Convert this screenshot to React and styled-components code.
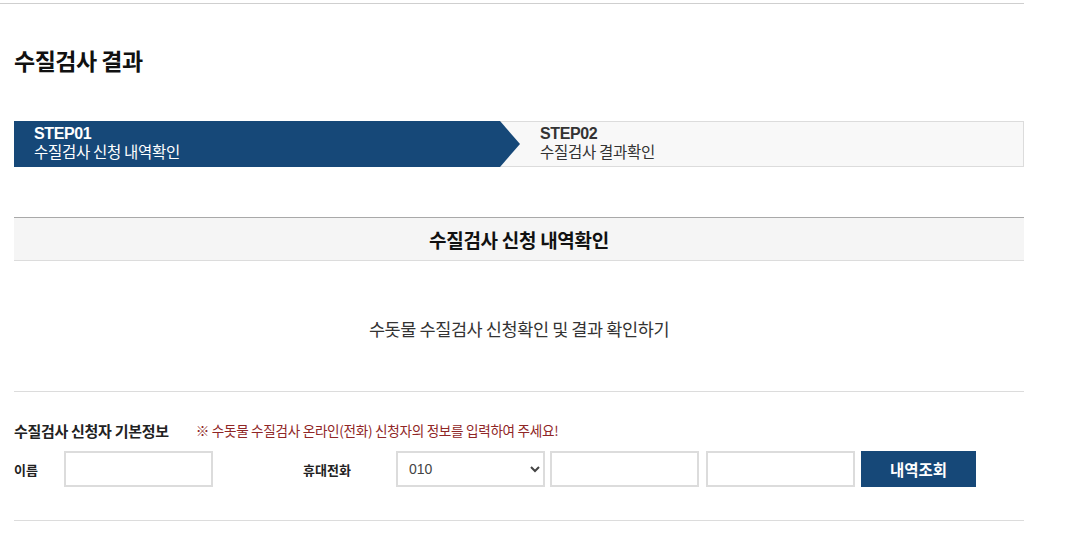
import React from 'react';
import styled, { createGlobalStyle } from 'styled-components';

const GlobalStyle = createGlobalStyle`
  body {
    margin: 0;
    background: #fff;
    font-family: "Noto Sans CJK KR", "Noto Sans", sans-serif;
    color: #222;
  }
  * { box-sizing: border-box; }
`;

const Page = styled.div`
  width: 1024px;
  padding-top: 3px;
`;

const TopRule = styled.div`
  height: 1px;
  background: #cfcfcf;
`;

const Content = styled.div`
  padding-left: 14px;
`;

const PageTitle = styled.h2`
  margin: 0;
  padding-top: 40px;
  height: 117px;
  font-size: 23px;
  font-weight: 700;
  letter-spacing: -0.5px;
  line-height: 32px;
  color: #111;
`;

const StepBar = styled.div`
  display: flex;
  height: 46px;
  background: #f8f8f8;
  border: 1px solid #dcdcdc;
`;

const Step = styled.div`
  display: flex;
  flex-direction: column;
  justify-content: center;
  padding-left: 20px;
  padding-bottom: 3px;
  color: ${p => (p.$active ? '#fff' : '#333')};
  ${p => p.$active && `
    width: 506px;
    margin: -1px 0 -1px -1px;
    background: #164878;
    clip-path: polygon(0 0, calc(100% - 20px) 0, 100% 50%, calc(100% - 20px) 100%, 0 100%);
  `}
`;

const StepNo = styled.span`
  font-family: "Liberation Sans", Arial, sans-serif;
  font-size: 16px;
  font-weight: 700;
  letter-spacing: -0.4px;
  line-height: 17px;
`;

const StepName = styled.span`
  font-size: 15.5px;
  line-height: 19px;
  letter-spacing: -0.3px;
`;

const SectionHead = styled.div`
  margin-top: 50px;
  height: 44px;
  display: flex;
  align-items: center;
  justify-content: center;
  background: #f5f5f5;
  border-top: 1px solid #a9a9a9;
  border-bottom: 1px solid #dcdcdc;
  font-size: 19px;
  font-weight: 700;
  letter-spacing: -0.3px;
  color: #111;
`;

const Intro = styled.p`
  margin: 0;
  height: 131px;
  padding-top: 56px;
  text-align: center;
  font-size: 17.5px;
  letter-spacing: -0.4px;
  line-height: 24px;
  color: #333;
  border-bottom: 1px solid #dcdcdc;
`;

const FormBox = styled.div`
  padding-top: 27px;
  height: 129px;
  border-bottom: 1px solid #dcdcdc;
`;

const FormTitleRow = styled.div`
  display: flex;
  align-items: center;
  gap: 27px;
  height: 22px;
`;

const FormTitle = styled.h3`
  margin: 0;
  font-size: 15px;
  font-weight: 700;
  letter-spacing: -0.3px;
  color: #222;
`;

const Notice = styled.span`
  font-size: 13.6px;
  letter-spacing: -0.3px;
  color: #8f2626;
`;

const FieldRow = styled.div`
  display: flex;
  align-items: center;
  margin-top: 10px;
  height: 36px;
`;

const Label = styled.label`
  width: ${p => p.$width}px;
  margin-left: ${p => p.$offset || 0}px;
  font-size: 13px;
  font-weight: 700;
  color: #222;
`;

const TextInput = styled.input`
  width: 149px;
  height: 36px;
  margin-right: ${p => p.$gap || 0}px;
  border: 2px solid #dcdcdc;
  background: #fff;
  padding: 0 10px;
  font-size: 13px;
  &:focus { outline: none; }
`;

const Select = styled.select`
  width: 149px;
  height: 36px;
  margin-right: 5px;
  border: 2px solid #dcdcdc;
  border-radius: 0;
  background: #fff;
  padding: 0 8px 0 7px;
  font-family: "Liberation Sans", Arial, sans-serif;
  font-size: 14px;
  color: #444;
`;

const SearchButton = styled.button`
  width: 115px;
  height: 36px;
  border: none;
  background: #164878;
  color: #fff;
  font-family: "Noto Sans CJK KR", sans-serif;
  font-size: 15.5px;
  font-weight: 700;
  cursor: pointer;
`;

const App = () => (
  <>
    <GlobalStyle />
    <Page>
      <TopRule />
      <Content>
        <PageTitle>수질검사 결과</PageTitle>
        <StepBar>
          <Step $active>
            <StepNo>STEP01</StepNo>
            <StepName>수질검사 신청 내역확인</StepName>
          </Step>
          <Step>
            <StepNo>STEP02</StepNo>
            <StepName>수질검사 결과확인</StepName>
          </Step>
        </StepBar>
        <SectionHead>수질검사 신청 내역확인</SectionHead>
        <Intro>수돗물 수질검사 신청확인 및 결과 확인하기</Intro>
        <FormBox>
          <FormTitleRow>
            <FormTitle>수질검사 신청자 기본정보</FormTitle>
            <Notice>※ 수돗물 수질검사 온라인(전화) 신청자의 정보를 입력하여 주세요!</Notice>
          </FormTitleRow>
          <FieldRow>
            <Label $width={50}>이름</Label>
            <TextInput type="text" />
            <Label $width={93} $offset={90}>휴대전화</Label>
            <Select defaultValue="010">
              <option value="010">010</option>
              <option value="011">011</option>
              <option value="016">016</option>
              <option value="017">017</option>
            </Select>
            <TextInput type="text" $gap={7} />
            <TextInput type="text" $gap={6} />
            <SearchButton type="button">내역조회</SearchButton>
          </FieldRow>
        </FormBox>
      </Content>
    </Page>
  </>
);

export default App;
